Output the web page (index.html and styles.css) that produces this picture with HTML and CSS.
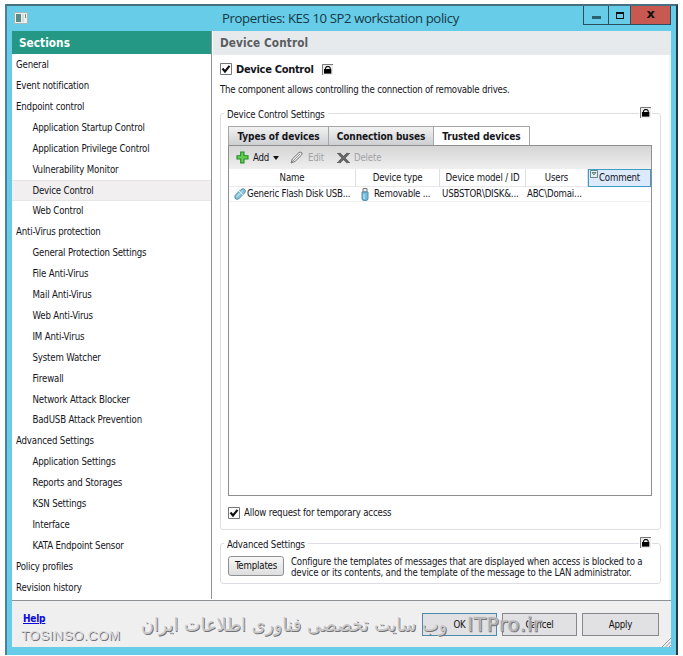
FILE: index.html
```html
<!DOCTYPE html>
<html lang="en">
<head>
<meta charset="utf-8">
<title>Properties: KES 10 SP2 workstation policy</title>
<link rel="stylesheet" href="styles.css">
</head>
<body>
<svg class="defs" width="0" height="0">
  <symbol id="lock" viewBox="0 0 11 11"><path d="M0 0H11V11H0Z" fill="#ececec"/><path d="M.5 11V.5H11" fill="none" stroke="#777"/><path d="M3.5 5V4L4.7 2.6H7L8.2 4V5" fill="none" stroke="#111" stroke-width="1.1"/><path d="M2 5H9.3V9.6H2Z" fill="#000"/></symbol>
  <symbol id="check" viewBox="0 0 12 12"><path d="M.5.5H11.5V11.5H.5Z" fill="#fff" stroke="#777"/><path d="M2.5 5.5L5 8.5L9.5 2.8" fill="none" stroke="#111" stroke-width="2.1"/></symbol>
</svg>
<div class="window">
  <header class="titlebar">
    <svg class="app-icon" width="14" height="12" viewBox="0 0 14 12"><path d="M.5.5H13.5V11.5H.5Z" fill="#edf1ee" stroke="#a6b8bb"/><path d="M2 2H7V10H2Z" fill="#568b86"/><path d="M8 2H10V10H8Z" fill="#d4dbd8"/><path d="M11 2H12V6H11Z" fill="#78918d"/></svg>
    <h1 class="title">Properties: KES 10 SP2 workstation policy</h1>
    <div class="controls">
      <span class="ctl min"><i></i></span><span class="ctl max"><i></i></span><span class="ctl close">x</span>
    </div>
  </header>
  <div class="client">
    <div class="main">
      <nav class="sidebar">
        <h2 class="side-title">Sections</h2>
        <ul class="list">
          <li>General</li><li>Event notification</li><li>Endpoint control</li>
          <li class="sub">Application Startup Control</li><li class="sub">Application Privilege Control</li><li class="sub">Vulnerability Monitor</li><li class="sub selected">Device Control</li><li class="sub">Web Control</li>
          <li>Anti-Virus protection</li>
          <li class="sub">General Protection Settings</li><li class="sub">File Anti-Virus</li><li class="sub">Mail Anti-Virus</li><li class="sub">Web Anti-Virus</li><li class="sub">IM Anti-Virus</li><li class="sub">System Watcher</li><li class="sub">Firewall</li><li class="sub">Network Attack Blocker</li><li class="sub">BadUSB Attack Prevention</li>
          <li>Advanced Settings</li>
          <li class="sub">Application Settings</li><li class="sub">Reports and Storages</li><li class="sub">KSN Settings</li><li class="sub">Interface</li><li class="sub">KATA Endpoint Sensor</li>
          <li>Policy profiles</li><li>Revision history</li>
        </ul>
      </nav>
      <section class="content">
        <h2 class="page-title">Device Control</h2>
        <div class="page">
          <div class="enable"><svg width="12" height="12"><use href="#check"/></svg><b>Device Control</b><svg width="11" height="11"><use href="#lock"/></svg></div>
          <p class="intro">The component allows controlling the connection of removable drives.</p>
          <div class="group devices">
            <span class="legend">Device Control Settings</span>
            <svg class="lock" width="11" height="11"><use href="#lock"/></svg>
            <div class="tabs"><span class="tab t1">Types of devices</span><span class="tab t2">Connection buses</span><span class="tab t3 active">Trusted devices</span></div>
            <div class="panel">
              <div class="toolbar">
                <svg width="13" height="13" viewBox="0 0 13 13"><path d="M4.7 1H8V4.7H12V8H8V12H4.7V8H1V4.7H4.7Z" fill="#68cf51" stroke="#218b27" stroke-width="1.1"/></svg>
                <span class="add">Add</span>
                <svg class="arrow" width="6" height="4" viewBox="0 0 6 4"><path d="M0 0H6L3 4Z" fill="#111"/></svg>
                <svg class="pencil" width="13" height="13" viewBox="0 0 13 13"><path d="M1 12L2.3 8L9 1.5Q11 .5 12 2Q12.5 3 11.3 4.3L5 10.5Z" fill="#e9e9e9" stroke="#777"/><path d="M4 9L10 3M2 11L4 9" stroke="#999" fill="none"/></svg>
                <span class="off edit">Edit</span>
                <svg class="del" width="13" height="12" viewBox="0 0 13 12"><path d="M2 1.5L11 10.5M11 1.5L2 10.5" stroke="#555" stroke-width="2.7"/><path d="M0 1.5H3.5M9.5 1.5H13M0 10.5H3.5M9.5 10.5H13" stroke="#666"/><path d="M2 1.5L11 10.5M11 1.5L2 10.5" stroke="#888" stroke-width=".7"/></svg>
                <span class="off delete">Delete</span>
              </div>
              <div class="row head"><span>Name</span><span>Device type</span><span>Device model / ID</span><span>Users</span><span class="hot">Comment<svg class="filter" width="8" height="8" viewBox="0 0 8 8"><path d="M.5.5H7.5V7.5H.5Z" fill="#e5f0ec" stroke="#648a91"/><path d="M2 2.5H6L4 5Z" fill="#bfd4cf" stroke="#516f72" stroke-width=".8"/></svg></span></div>
              <div class="row data">
                <span><svg width="12" height="12" viewBox="0 0 12 12"><path d="M1 7.5L7 1.5Q10 -.5 11.3 2.5Q11.6 4 10 5.5L4.5 11Q2 12 1 10.3Z" fill="#8dc7dc" stroke="#4b8ba5"/><path d="M3 8.5L8 3.5M5 3L9 7" stroke="#d7f0f5"/></svg><em class="n1">Generic Flash Disk USB...</em></span>
                <span><svg width="8" height="13" viewBox="0 0 8 13"><path d="M2 .5H6V4H2Z" fill="#eee" stroke="#6d7d84"/><path d="M1 4H7V11Q7 12.5 4 12.5T1 11Z" fill="#75bddd" stroke="#508ba6"/><path d="M3 6V11" stroke="#c5eaf6"/></svg><em class="n2">Removable ...</em></span>
                <span class="model">USBSTOR\DISK&amp;...</span><span class="user">ABC\Domai...</span><span></span>
              </div>
            </div>
            <label class="allow"><svg width="12" height="12"><use href="#check"/></svg><span>Allow request for temporary access</span></label>
          </div>
          <div class="group advanced">
            <span class="legend">Advanced Settings</span>
            <svg class="lock" width="11" height="11"><use href="#lock"/></svg>
            <button class="templates">Templates</button>
            <p class="desc"><span class="l1">Configure the templates of messages that are displayed when access is blocked to a</span><br><span class="l2">device or its contents, and the template of the message to the LAN administrator.</span></p>
          </div>
        </div>
      </section>
    </div>
    <footer class="footer">
      <a class="help">Help</a>
      <div class="buttons"><button class="ok">OK</button><button>Cancel</button><button class="apply">Apply</button></div>
      <svg class="grip" width="10" height="10" viewBox="0 0 10 10"><path d="M1 10L10 1M4.5 10L10 4.5M8 10L10 8" stroke="#999"/></svg>
      <svg class="watermark" width="540" height="46">
        <text class="w-site" x="9" y="39" textLength="99">TOSINSO.COM</text>
        <text class="w-fa" x="435" y="30" direction="rtl" textLength="306" lengthAdjust="spacingAndGlyphs">وب سایت تخصصی فناوری اطلاعات ایران</text>
        <text class="w-it" x="455" y="30" textLength="74">ITPro.ir</text>
      </svg>
    </footer>
  </div>
</div>
</body>
</html>
```
FILE: styles.css
```css
* { box-sizing: border-box; }
body { margin: 0; width: 683px; height: 656px; overflow: hidden; background: #fff; padding: 4px 5px 0; font: 9.6px/12px "DejaVu Sans Condensed", "DejaVu Sans", sans-serif; font-stretch: condensed; color: #15151c; letter-spacing: -0.17px; }
h1, h2, p, ul { margin: 0; padding: 0; }
svg { flex: none; display: block; }
.defs { position: absolute; }
.window { width: 673px; height: 651px; background: #66cce8; border: solid; border-width: 2px 2px 0 2px; border-color: #46707f #263b44 #66cce8 #4b8299; padding: 0 5px 8px; display: flex; flex-direction: column; }
.titlebar { height: 25px; flex: none; display: flex; align-items: flex-start; }
.app-icon { margin: 6px 0 0 2px; }
.title { font: 13.2px/25px "Open Sans", "Noto Sans", sans-serif; letter-spacing: -0.4px; margin-left: 194px; width: 360px; color: #163843; white-space: nowrap; }
.controls { display: flex; height: 19px; margin-left: 1px; border: 1px solid #294f5c; border-top: 0; }
.ctl { display: flex; align-items: center; justify-content: center; width: 25px; border-right: 1px solid #294f5c; }
.ctl.max { width: 22px; }
.ctl.close { width: 39px; border: 0; background: #c75950; color: #111; font: bold 13px/16px "DejaVu Sans", sans-serif; padding-bottom: 2px; }
.min i { width: 9px; height: 3px; background: #2a626f; margin-top: 4px; }
.max i { width: 8px; height: 7px; border: 1.5px solid #111; border-top-width: 2px; }
.client { flex: 1; display: flex; flex-direction: column; min-height: 0; background: #f0eff0; }
.main { height: 569px; flex: none; display: flex; background: #fff; }
.sidebar { width: 200px; flex: none; border-right: 1px solid #8e9295; height: 568px; }
.side-title { height: 23px; background: #249885; color: #fff; font: bold 11.7px/24px "DejaVu Sans Condensed", sans-serif; padding-left: 7px; letter-spacing: 0.05px; }
.list { list-style: none; padding-top: 1px; }
.list li { height: 20.92px; line-height: 20.92px; padding-left: 4px; white-space: nowrap; }
.list .sub { padding-left: 20.5px; }
.list .selected { background: #f1eff0; border: 1px solid #e7e5e6; border-width: 1px 0; line-height: 19px; }
.content { flex: 1; margin-left: 1px; border-right: 2px solid #f1f4f7; }
.page-title { background: #e6eaed; height: 24px; color: #5b5d60; font: bold 11.7px/24px "DejaVu Sans Condensed", sans-serif; padding-left: 7px; letter-spacing: 0.1px; margin-right: -2px; }
.page { padding: 8px 8px 0 7px; }
.enable { display: flex; align-items: center; height: 12px; font-size: 11px; letter-spacing: -0.3px; }
.enable b { margin: 1px 8px 0 4px; }
.intro { margin-top: 7px; line-height: 14px; white-space: nowrap; letter-spacing: -0.22px; position: relative; top: 1px; }
.group { position: relative; border: 1px solid #dcdee3; border-radius: 3px; }
.legend { position: absolute; left: 3px; top: -5px; padding: 0 3px; background: #fff; }
.lock { position: absolute; right: 9px; top: -7px; outline: 1px solid #fff; }
.devices { height: 417px; margin-top: 17px; padding: 12px 8px 0 7px; }
.tabs { display: flex; height: 19px; margin-right: -1px; }
.tab { border: 1px solid #a4a6a8; border-width: 1px 1px 0 0; background: linear-gradient(#f2f2f2, #cecfd1); font-weight: bold; font-size: 10px; line-height: 19px; text-align: center; white-space: nowrap; letter-spacing: -0.08px; }
.t1 { width: 101px; border-left-width: 1px; }
.t2 { width: 105px; }
.t3 { width: 96px; }
.tab.active { background: #fff; }
.panel { border: 1px solid #8d8f91; height: 351px; }
.toolbar { height: 23px; background: linear-gradient(#d5d5d6, #efeff0); display: flex; align-items: center; padding-left: 7px; }
.add { margin-left: 4px; width: 18px; }
.arrow { margin-left: 2px; }
.pencil { margin-left: 11px; }
.edit { margin-left: 5px; width: 18px; }
.del { margin-left: 11px; }
.delete { margin-left: 4px; }
.off { color: #a1a2a3; }
.row { display: grid; grid-template-columns: 127px 84px 86px 62px 63px; }
.head { height: 18px; line-height: 17px; text-align: center; border-bottom: 1px solid #e8e8ea; white-space: nowrap; }
.head span { border-right: 1px solid #dedfe2; }
.head .hot { position: relative; background: #dceafc; border: 1px solid #409bc5; height: 18px; line-height: 16px; }
.filter { position: absolute; left: 1px; top: 0; }
.data { height: 15px; border-bottom: 1px solid #f0f0f3; white-space: nowrap; }
.data span { display: flex; align-items: center; padding-left: 5px; }
.data em { font-style: normal; margin-left: 1px; letter-spacing: -0.22px; }
.data .n2 { margin-left: 5px; }
.data .model { padding-left: 2px; }
.data .user { padding-left: 1px; }
.allow { display: flex; align-items: center; margin-top: 11px; gap: 4px; }
.advanced { height: 41px; margin-top: 13px; display: flex; padding: 12px 0 0 7px; }
button { font: inherit; letter-spacing: inherit; color: #111; padding: 0; }
.templates { width: 56px; height: 20px; border: 1px solid #8e9092; border-radius: 3px; background: linear-gradient(#f7f7f7, #dedede); }
.desc { margin-left: 7px; line-height: 11.4px; white-space: nowrap; }
.l1 { letter-spacing: -0.18px; }
.footer { flex: 1; border-top: 1px solid #8f9294; position: relative; display: flex; justify-content: space-between; }
.help { color: #0808df; font: bold 10px/12px "DejaVu Sans Condensed", sans-serif; text-decoration: underline; margin: 12px 0 0 11px; letter-spacing: -0.2px; }
.buttons { display: flex; gap: 5px; margin: 12px 12px 0 0; }
.buttons button { width: 75px; height: 23px; background: #e1e0e2; border: 1px solid #85878a; }
.buttons .apply { width: 77px; }
.buttons .ok { border-color: #4d89aa; }
.grip { position: absolute; right: 0; bottom: 0; }
.watermark { position: absolute; left: 0; top: 0; letter-spacing: 0; fill: #dcdcdd; text-shadow: 1px 1px 0 #737376; }
.w-site { font: 13.5px "Liberation Sans", sans-serif; }
.w-fa { font: 19px "DejaVu Sans", sans-serif; fill: #c9c9ca; }
.w-it { font: 20px "DejaVu Sans", sans-serif; fill: #c9c9ca; stroke: #c9c9ca; stroke-width: .5px; }
```
